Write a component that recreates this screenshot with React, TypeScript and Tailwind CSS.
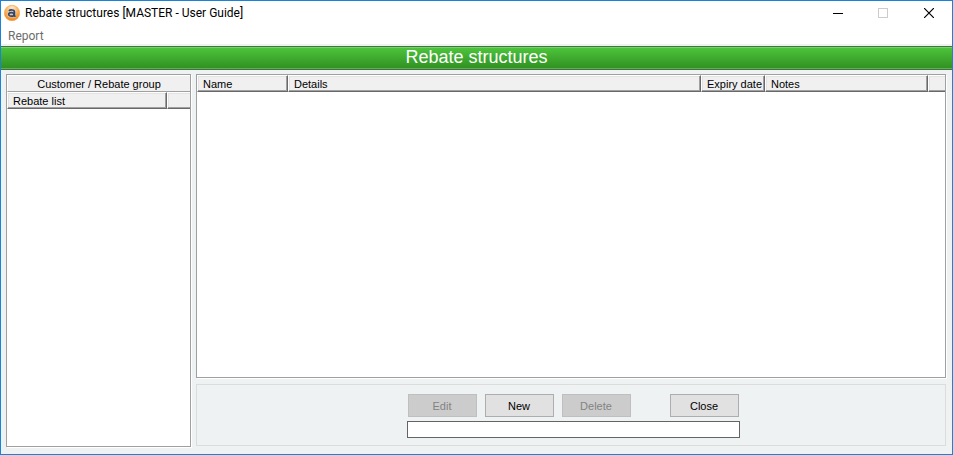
import { useState } from "react"
import type { ReactNode } from "react"

const columns = [
  { label: "Name", width: "w-[91px]" },
  { label: "Details", width: "" },
  { label: "Expiry date", width: "w-[64px]" },
  { label: "Notes", width: "w-[163px]" },
]

const raised =
  "h-[17px] border-t border-l border-r border-b border-t-white border-l-white border-r-[#696969] border-b-[#696969] bg-[#f0f0f0] p-0 text-left font-normal shadow-[inset_-1px_-1px_0_#a0a0a0,inset_1px_1px_0_#e3e3e3]"
const raisedEnd =
  "h-[17px] border-t border-l border-b border-t-white border-l-white border-b-[#696969] bg-[#f0f0f0] p-0 shadow-[inset_0_-1px_0_#a0a0a0,inset_1px_1px_0_#e3e3e3]"

function AppIcon() {
  return (
    <svg width="16" height="16" viewBox="0 0 16 16" aria-hidden="true">
      <defs>
        <radialGradient id="orb" cx="0.5" cy="0.2" r="0.85">
          <stop offset="0" stopColor="#fdecd2" />
          <stop offset="0.5" stopColor="#f9b25a" />
          <stop offset="1" stopColor="#ee7d10" />
        </radialGradient>
      </defs>
      <circle cx="8" cy="8" r="7.7" fill="url(#orb)" stroke="#f6a040" strokeWidth="0.6" />
      <g fill="none" stroke="#d9cfc6" strokeWidth="3" opacity="0.75">
        <path d="M5 5.9c.9-1.3 5.4-1.5 5.4 1v3.2c0 .9.4 1.2 1.2 1.1" />
        <ellipse cx="7.4" cy="9.4" rx="2.7" ry="1.7" />
      </g>
      <g fill="none" stroke="#34476b" strokeWidth="1.7">
        <path d="M5 5.9c.9-1.3 5.4-1.5 5.4 1v3.2c0 .9.4 1.2 1.2 1.1" />
        <ellipse cx="7.4" cy="9.4" rx="2.7" ry="1.7" />
      </g>
    </svg>
  )
}

function HeaderLabel({ children }: { children: ReactNode }) {
  return <span className="block h-[15px] truncate pl-[5px] leading-[17px]">{children}</span>
}

function ActionButton({ children, disabled = false }: { children: ReactNode; disabled?: boolean }) {
  return (
    <button
      type="button"
      disabled={disabled}
      className="h-[23px] w-[69px] border border-[#adadad] bg-[#e1e1e1] pt-px text-black disabled:border-[#bfbfbf] disabled:bg-[#cccccc] disabled:text-[#838383]"
    >
      {children}
    </button>
  )
}

export default function App() {
  const [status, setStatus] = useState("")

  return (
    <div className="flex h-screen flex-col border border-[#1883d7] bg-[#eef2f3] font-['Liberation_Sans',Arial,sans-serif] text-[11px] text-black">
      {/* Title bar */}
      <header className="flex h-6 items-center justify-between bg-white pl-[3px] font-[Roboto,sans-serif] text-xs">
        <div className="flex items-center gap-[5px]">
          <AppIcon />
          <h1>Rebate structures [MASTER - User Guide]</h1>
        </div>
        <div className="flex h-full">
          <button type="button" aria-label="Minimize" className="flex w-[45px] items-center justify-center">
            <svg width="10" height="10" viewBox="0 0 10 10" shapeRendering="crispEdges">
              <path d="M0 5.5h10" stroke="#000" />
            </svg>
          </button>
          <button type="button" aria-label="Maximize" disabled className="flex w-[45px] items-center justify-center">
            <svg width="10" height="10" viewBox="0 0 10 10" shapeRendering="crispEdges">
              <path d="M.5 .5h9v9h-9z" fill="none" stroke="#ccc" />
            </svg>
          </button>
          <button type="button" aria-label="Close window" className="flex w-[47px] items-center justify-center">
            <svg width="10" height="10" viewBox="0 0 10 10">
              <path d="M0 0l10 10M10 0L0 10" stroke="#000" strokeWidth="1.2" />
            </svg>
          </button>
        </div>
      </header>

      {/* Menu */}
      <nav className="flex h-5 items-end border-b border-[#f0f0f0] bg-white px-[7px] font-[Roboto,sans-serif] text-xs text-[#6d6d6d]">
        <button type="button">Report</button>
      </nav>

      <h2 className="mt-px h-6 border-y border-[#3c763a] bg-linear-to-b from-[#4ec63d] to-[#2f8f20] text-center text-lg leading-[21px] text-white shadow-[inset_0_1px_0_#7bd06d,inset_0_-1px_0_#6aa860]">
        Rebate structures
      </h2>

      <main className="flex min-h-0 flex-1 gap-[5px] px-[5px] pt-1 pb-[7px]">
        <section className="w-[185px] border border-[#a0a0a0] bg-white shadow-[1px_1px_0_#fff]">
          <h3 className="h-[17px] border-t border-l border-b border-t-white border-l-white border-b-[#a0a0a0] bg-[#f0f0f0] text-center leading-[17px]">
            Customer / Rebate group
          </h3>
          <table className="w-full table-fixed border-separate border-spacing-0">
            <thead>
              <tr>
                <th className={raised}>
                  <HeaderLabel>Rebate list</HeaderLabel>
                </th>
                <td className={`w-[23px] ${raisedEnd}`} />
              </tr>
            </thead>
          </table>
        </section>

        <div className="flex min-w-0 flex-1 flex-col gap-[6px] pr-px pb-px">
          <section className="min-h-0 flex-1 border border-[#a0a0a0] bg-white shadow-[1px_1px_0_#fff]">
            <table className="w-full table-fixed border-separate border-spacing-0">
              <thead>
                <tr>
                  {columns.map((column) => (
                    <th key={column.label} className={`${column.width} ${raised}`}>
                      <HeaderLabel>{column.label}</HeaderLabel>
                    </th>
                  ))}
                  <td className={`w-[17px] ${raisedEnd}`} />
                </tr>
              </thead>
            </table>
          </section>

          <footer className="flex h-[62px] flex-col items-center gap-1 border border-[#dcdcdc] pt-[9px] pl-1">
            <div className="flex w-[331px] gap-2">
              <ActionButton disabled>Edit</ActionButton>
              <ActionButton>New</ActionButton>
              <ActionButton disabled>Delete</ActionButton>
              <div className="ml-auto">
                <ActionButton>Close</ActionButton>
              </div>
            </div>
            <input
              type="text"
              aria-label="Status"
              value={status}
              onChange={(e) => setStatus(e.target.value)}
              className="h-[17px] w-[333px] border border-[#646464] bg-white px-1 outline-none"
            />
          </footer>
        </div>
      </main>
    </div>
  )
}
